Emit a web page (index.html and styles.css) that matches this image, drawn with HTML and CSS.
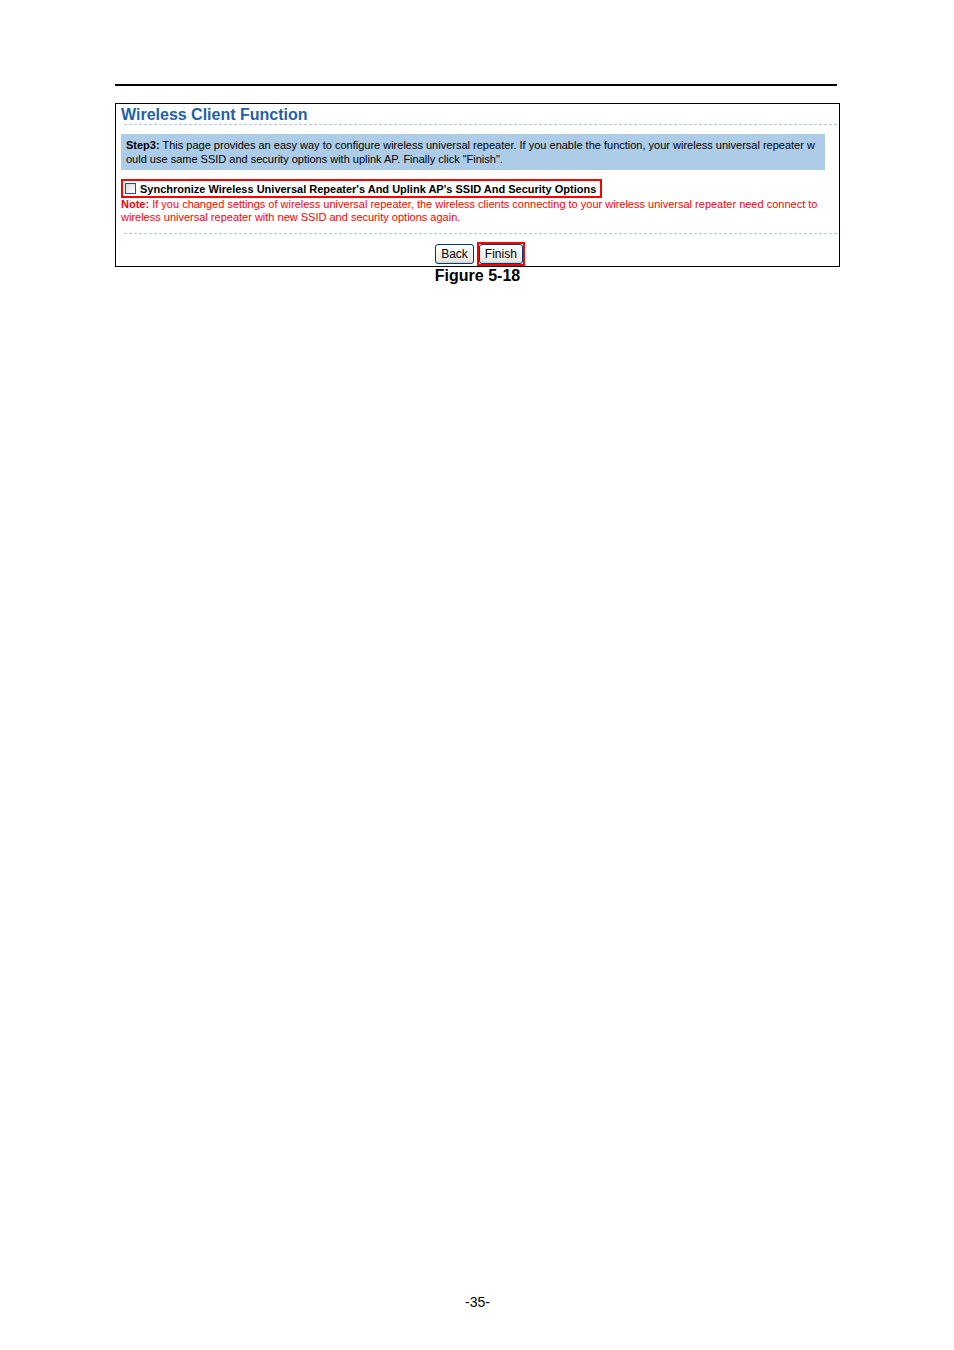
FILE: index.html
```
<!DOCTYPE html>
<html lang="en">
<head>
    <meta charset="utf-8">
    <title>Wireless Client Function</title>
    <link rel="stylesheet" href="styles.css">
</head>
<body>
    <header class="page-rule"></header>

    <main>
        <figure class="figure">
            <form class="panel">
                <h1 class="title">Wireless Client Function</h1>
                <div class="dashed"></div>

                <p class="intro">
                    <b>Step3:</b> This page provides an easy way to configure wireless universal repeater. If you enable the function, your wireless universal repeater w<br>
                    ould use same SSID and security options with uplink AP. Finally click "Finish".
                </p>

                <!-- sync option -->
                <div class="option">
                    <input type="checkbox" id="syncOption" class="check">
                    <label for="syncOption">Synchronize Wireless Universal Repeater's And Uplink AP's SSID And Security Options</label>
                </div>
                <p class="note">
                    <b>Note:</b> If you changed settings of wireless universal repeater, the wireless clients connecting to your wireless universal repeater need connect to<br>
                    wireless universal repeater with new SSID and security options again.
                </p>
                <div class="dashed"></div>

                <div class="btn-container">
                    <button type="button" class="btn">Back</button>
                    <span class="marked"><button type="button" class="btn btn-finish">Finish</button></span>
                </div>
            </form>
            <figcaption class="caption">Figure 5-18</figcaption>
        </figure>
    </main>

    <footer class="page-number">-35-</footer>
</body>
</html>
```

FILE: styles.css
```
* {
    box-sizing: border-box;
}

body {
    display: flex;
    flex-direction: column;
    min-height: 100vh;
    margin: 0;
    padding: 84px 114px 40px 115px;
    background: #fff;
    color: #000;
    font-family: "Liberation Sans", Arial, sans-serif;
}

main {
    flex: 1;
}

/* black line at the top of the page */
.page-rule {
    height: 2px;
    margin: 0 3px 17px 0;
    background: #000;
}

.figure {
    margin: 0;
}

.panel {
    padding-left: 5px;
    border: 1px solid #000;
    font-size: 11px;
    line-height: 14px;
}

.title {
    margin: 0;
    padding-top: 2px;
    color: #1f62a8;
    font-size: 16px;
    line-height: 18px;
}

.dashed {
    height: 1px;
    margin-left: 3px;
    background: repeating-linear-gradient(to right, #a9cbe6 0 3px, transparent 3px 5px);
}

.intro {
    margin: 9px 14px 9px 0;
    padding: 4px 0 4px 5px;
    background: #adcce8;
    white-space: nowrap;
}

/* red frame round the option */
.option {
    display: flex;
    align-items: center;
    gap: 4px;
    width: fit-content;
    height: 19px;
    padding: 0 4px 0 2px;
    border: 2px solid #f00;
    font-weight: bold;
    white-space: nowrap;
}

.check {
    appearance: none;
    width: 11px;
    height: 11px;
    margin: 0;
    border: 1px solid #1c5180;
    background: linear-gradient(135deg, #dcdcd7, #fff);
}

.note {
    margin: 0 0 9px;
    color: #f00;
    line-height: 13px;
    white-space: nowrap;
}

.btn-container {
    display: flex;
    justify-content: center;
    align-items: center;
    gap: 3px;
    height: 32px;
    padding-top: 8px;
}

.btn {
    height: 20px;
    padding: 0 5px;
    border: 1px solid #003c74;
    border-radius: 3px;
    background: linear-gradient(#fff, #ecebe6 85%, #d6d0c5);
    color: #000;
    font-family: inherit;
    font-size: 12px;
    line-height: 16px;
}

.btn-finish {
    display: block;
}

.marked {
    border: 2px solid #f00;
}

.caption {
    font-size: 16px;
    font-weight: bold;
    line-height: 18px;
    text-align: center;
}

.page-number {
    font-size: 14px;
    line-height: 16px;
    text-align: center;
}
```
